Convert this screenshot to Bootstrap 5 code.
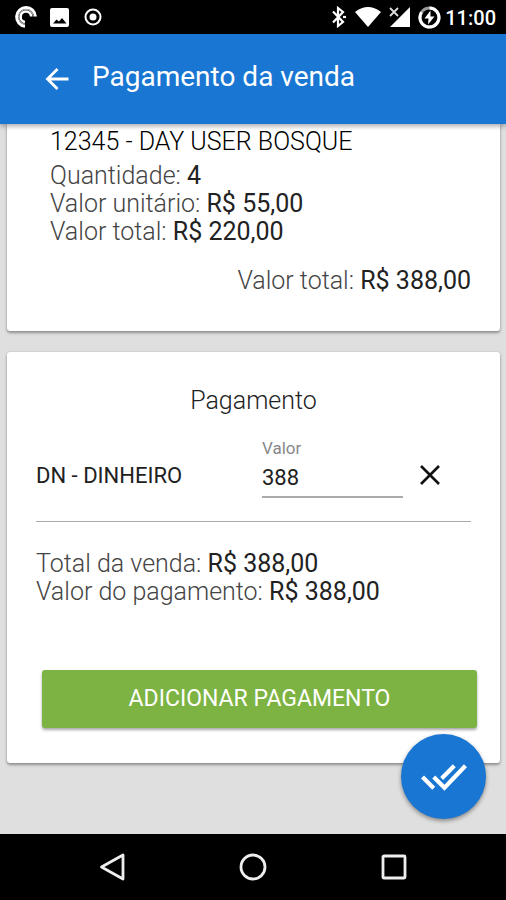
<!DOCTYPE html>
<html lang="pt-BR">
<head>
<meta charset="utf-8">
<meta name="viewport" content="width=device-width, initial-scale=1">
<title>Pagamento da venda</title>
<link href="https://cdn.jsdelivr.net/npm/bootstrap@5.3.0/dist/css/bootstrap.min.css" rel="stylesheet">
<style>
  body { font-family: Roboto, "Liberation Sans", sans-serif; font-size: 25px; line-height: 28px; color: #212121; background: #dfdfdf; }
  svg { display: block; flex: none; }
  .status-bar { height: 34px; padding: 0 10px 0 14px; font-size: 20px; font-weight: 500; line-height: 34px; }
  .status-bar span { padding-top: 2px; }
  .app-bar { height: 90px; padding: 0 44px; background: #1976d2; box-shadow: 0 2px 5px rgba(0,0,0,.35); z-index: 2; }
  .app-title { font-size: 28px; line-height: 34px; font-weight: 400; }
  .back-btn { margin-right: 22px; }
  .content { padding: 0 6px 70px 7px; }
  .panel { border-radius: 3px; box-shadow: 0 2px 3px rgba(0,0,0,.35), 0 0 2px rgba(0,0,0,.15); }
  .panel-sale { padding: 4px 29px 36px 43px; border-radius: 0 0 3px 3px; margin-bottom: 21px; }
  .panel-payment { padding: 35px 29px 35px; }
  .sale-lines { padding-top: 6px; margin-bottom: 21px; }
  .muted-text { color: #444; font-weight: 300; }
  .item-name { font-weight: 300; color: #000; }
  .value-text { color: #222; }
  .payment-title { font-size: 25px; line-height: 28px; font-weight: 300; color: #222; }
  .payment-row { margin-top: 23px; padding-bottom: 23px; border-bottom: 1px solid #aaa; }
  .payment-name { width: 226px; margin-top: 24px; font-size: 22px; }
  .value-field { width: 141px; }
  .value-field label { font-size: 17px; line-height: 20px; color: #888; }
  .value-field input { width: 100%; height: 40px; padding: 1px 0 0; border: 0; border-bottom: 2px solid #aaa; border-radius: 0; font-size: 22px; line-height: 28px; color: #212121; background: none; }
  .remove-btn { margin: 20px 0 0 10px; padding: 4px; }
  .totals { padding: 28px 0 64px; }
  .add-btn { height: 58px; margin: 0 -6px 0 6px; padding: 0; border: 0; border-radius: 3px; background: #7cb342; font-size: 23px; line-height: 28px; box-shadow: 0 2px 3px rgba(0,0,0,.35); }
  .confirm-btn { right: 20px; bottom: 15px; width: 85px; height: 85px; background: #1976d2; box-shadow: 0 2px 4px rgba(0,0,0,.4); }
  .system-nav { height: 66px; padding: 0 42px; }
</style>
<script src="https://cdn.jsdelivr.net/npm/bootstrap@5.3.0/dist/js/bootstrap.bundle.min.js"></script>
</head>
<body class="d-flex flex-column min-vh-100">
  <div class="status-bar d-flex align-items-center justify-content-between bg-black text-white">
    <div class="d-flex align-items-center">
      <svg width="24" height="24" viewBox="0 0 24 24" fill="none" stroke="#fff"><path d="M11 21.2A9.4 9.4 0 1 1 21.4 11.5" stroke-width="3"/><path d="M11 17A5.3 5.3 0 1 1 17.2 11.5" stroke-width="2.6"/><path d="M11 19.2A7.4 7.4 0 1 1 19.4 11.5" stroke="#aaa" stroke-width="1.2"/></svg>
      <svg class="ms-2 me-2" width="26" height="24" viewBox="0 0 26 24"><rect x="4" y="3" width="19" height="19" rx="2" fill="#fff"/><path d="M7 18.500l3.500-4 2.500 2 3-3.500 4.500 5.500z" fill="#000"/></svg>
      <svg class="ms-1" width="20" height="20" viewBox="0 0 20 20"><circle cx="9" cy="10" r="7.500" fill="none" stroke="#fff" stroke-width="2"/><circle cx="9" cy="10" r="3.500" fill="#fff"/></svg>
    </div>
    <div class="d-flex align-items-center">
      <svg width="16" height="22" viewBox="0 0 16 22" fill="none" stroke="#fff" stroke-width="2.200"><path d="M2 5.500l10 10.500-5 4V2l5 4L2 16.500"/><path d="M12 11h3"/></svg>
      <svg class="ms-2" width="26" height="22" viewBox="0 0 26 22"><path d="M0 6Q13-4 26 6L13 21z" fill="#fff"/></svg>
      <svg class="ms-2" width="21" height="22" viewBox="0 0 21 22"><path d="M21 1v20H1z" fill="#fff"/><path d="M1 2l8 8M9 2l-8 8" stroke="#000" stroke-width="4"/><path d="M1 2l8 8M9 2l-8 8" stroke="#ddd" stroke-width="1.800"/></svg>
      <svg class="ms-2 me-1" width="23" height="23" viewBox="0 0 23 23"><circle cx="11.500" cy="11.500" r="9.500" fill="none" stroke="#999" stroke-width="3"/><path d="M11.500 2a9.500 9.500 0 1 1-8 4.300" fill="none" stroke="#fff" stroke-width="3"/><path d="M12.500 4.500L6.500 12.500h4l-.500 6 6.500-8h-4z" fill="#fff"/></svg>
      <span>11:00</span>
    </div>
  </div>

  <header class="app-bar d-flex align-items-center text-white position-relative">
    <button class="btn border-0 p-0 back-btn" type="button" aria-label="Voltar">
      <svg width="26" height="26" viewBox="0 0 26 26" fill="none" stroke="#fff" stroke-width="2.800"><path d="M24.500 13H4M13.500 3L3.500 13l10 10"/></svg>
    </button>
    <h1 class="app-title mb-1">Pagamento da venda</h1>
  </header>

  <main class="content flex-grow-1 position-relative">
    <section class="panel panel-sale bg-white">
      <div class="item-name">12345 - DAY USER BOSQUE</div>
      <div class="sale-lines">
        <div><span class="muted-text">Quantidade:</span> <span class="value-text">4</span></div>
        <div><span class="muted-text">Valor unitário:</span> <span class="value-text">R$ 55,00</span></div>
        <div><span class="muted-text">Valor total:</span> <span class="value-text">R$ 220,00</span></div>
      </div>
      <div class="text-end"><span class="muted-text">Valor total:</span> <span class="value-text">R$ 388,00</span></div>
    </section>

    <section class="panel panel-payment bg-white">
      <h2 class="payment-title text-center mb-0">Pagamento</h2>
      <div class="payment-row d-flex align-items-start">
        <div class="payment-name">DN - DINHEIRO</div>
        <div class="value-field d-flex flex-column">
          <label for="valor">Valor</label>
          <input id="valor" type="text" inputmode="decimal" value="388">
        </div>
        <button class="btn border-0 remove-btn" type="button" aria-label="Remover">
          <svg width="26" height="26" viewBox="0 0 26 26" fill="none" stroke="#111" stroke-width="2.600"><path d="M4 4l18 18M22 4L4 22"/></svg>
        </button>
      </div>
      <div class="totals">
        <div><span class="muted-text">Total da venda:</span> <span class="value-text">R$ 388,00</span></div>
        <div><span class="muted-text">Valor do pagamento:</span> <span class="value-text">R$ 388,00</span></div>
      </div>
      <div class="d-grid"><button class="btn add-btn text-white" type="button">ADICIONAR PAGAMENTO</button></div>
    </section>

    <button class="btn border-0 rounded-circle p-0 confirm-btn position-absolute d-flex align-items-center justify-content-center" type="button" aria-label="Confirmar">
      <svg width="48" height="28" viewBox="0 0 50 30" fill="none" stroke="#fff" stroke-width="4.500"><path d="M2 15l12 12M14 15l11.500 11.500L48 3M36 3L22.500 16.500"/></svg>
    </button>
  </main>

  <nav class="system-nav bg-black d-flex align-items-center" aria-label="Sistema">
    <button class="btn border-0 p-0 flex-fill d-flex justify-content-center" type="button" aria-label="Voltar">
      <svg width="28" height="30" viewBox="0 0 28 30" fill="none" stroke="#eee" stroke-width="2.800" stroke-linejoin="round"><path d="M25 3v24L3.500 15z"/></svg>
    </button>
    <button class="btn border-0 p-0 flex-fill d-flex justify-content-center" type="button" aria-label="Início">
      <svg width="28" height="28" viewBox="0 0 28 28"><circle cx="14" cy="14" r="12" fill="none" stroke="#eee" stroke-width="2.800"/></svg>
    </button>
    <button class="btn border-0 p-0 flex-fill d-flex justify-content-center" type="button" aria-label="Recentes">
      <svg width="28" height="28" viewBox="0 0 28 28"><rect x="3" y="3" width="22" height="22" rx="1" fill="none" stroke="#eee" stroke-width="2.800"/></svg>
    </button>
  </nav>
</body>
</html>
